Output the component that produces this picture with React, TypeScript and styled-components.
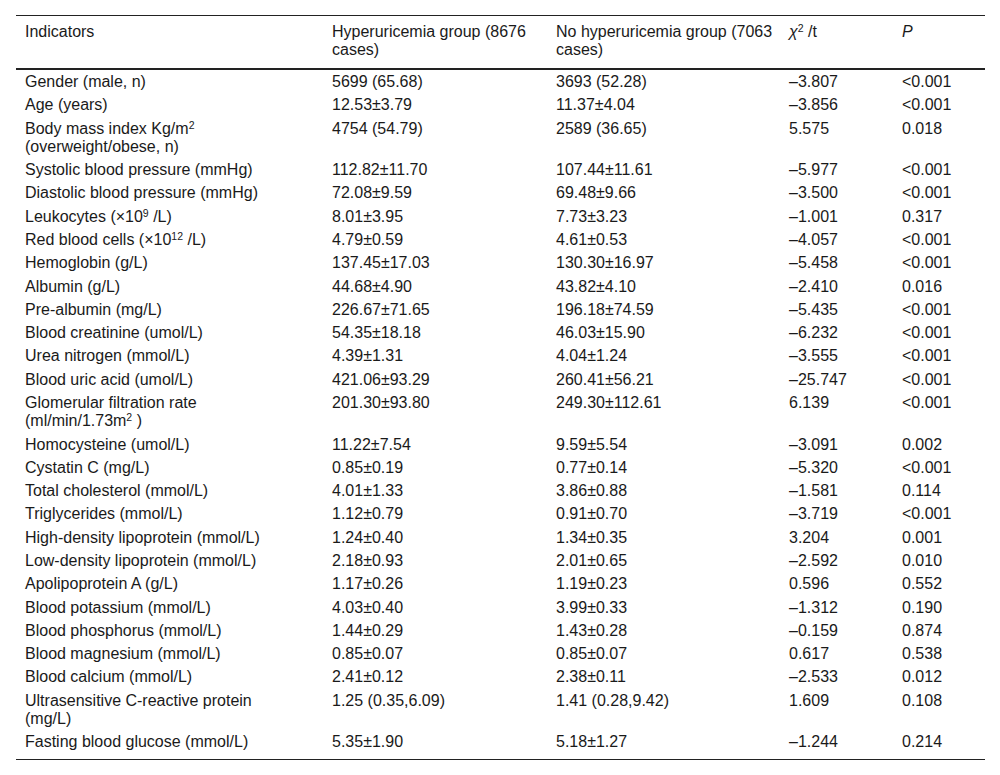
import React from 'react';
import styled, { createGlobalStyle } from 'styled-components';

const GlobalStyle = createGlobalStyle`
  body {
    margin: 0;
    background: #fff;
    font-family: "Liberation Sans", Arial, sans-serif;
    color: #1a1a1a;
  }
`;

const Page = styled.div`
  padding: 15px 15px 0 16px;
`;

const Table = styled.table`
  width: 969px;
  border-collapse: collapse;
  table-layout: fixed;
  font-size: 16px;
  line-height: 18.2px;
  border-top: 1px solid #222;
  border-bottom: 1px solid #222;

  sup {
    font-size: 10.5px;
    line-height: 0;
    vertical-align: 5.5px;
  }
`;

const HeadCell = styled.th`
  text-align: left;
  font-weight: normal;
  vertical-align: top;
  padding: 7px 4px 9px 9px;
  border-bottom: 2px solid #222;
`;

const Cell = styled.td<{ $last?: boolean }>`
  vertical-align: top;
  padding: 2.55px 4px ${(p) => (p.$last ? '8px' : '2.55px')} 9px;
  &:first-child {
    padding-right: 40px;
  }
`;

const Ital = styled.i`
  font-style: italic;
`;

type Row = [React.ReactNode, string, string, string, string];

const rows: Row[] = [
  ['Gender (male, n)', '5699 (65.68)', '3693 (52.28)', '–3.807', '<0.001'],
  ['Age (years)', '12.53±3.79', '11.37±4.04', '–3.856', '<0.001'],
  [<>Body mass index Kg/m<sup>2</sup> (overweight/obese, n)</>, '4754 (54.79)', '2589 (36.65)', '5.575', '0.018'],
  ['Systolic blood pressure (mmHg)', '112.82±11.70', '107.44±11.61', '–5.977', '<0.001'],
  ['Diastolic blood pressure (mmHg)', '72.08±9.59', '69.48±9.66', '–3.500', '<0.001'],
  [<>Leukocytes (×10<sup>9</sup> /L)</>, '8.01±3.95', '7.73±3.23', '–1.001', '0.317'],
  [<>Red blood cells (×10<sup>12</sup> /L)</>, '4.79±0.59', '4.61±0.53', '–4.057', '<0.001'],
  ['Hemoglobin (g/L)', '137.45±17.03', '130.30±16.97', '–5.458', '<0.001'],
  ['Albumin (g/L)', '44.68±4.90', '43.82±4.10', '–2.410', '0.016'],
  ['Pre-albumin (mg/L)', '226.67±71.65', '196.18±74.59', '–5.435', '<0.001'],
  ['Blood creatinine (umol/L)', '54.35±18.18', '46.03±15.90', '–6.232', '<0.001'],
  ['Urea nitrogen (mmol/L)', '4.39±1.31', '4.04±1.24', '–3.555', '<0.001'],
  ['Blood uric acid (umol/L)', '421.06±93.29', '260.41±56.21', '–25.747', '<0.001'],
  [<>Glomerular filtration rate (ml/min/1.73m<sup>2</sup> )</>, '201.30±93.80', '249.30±112.61', '6.139', '<0.001'],
  ['Homocysteine (umol/L)', '11.22±7.54', '9.59±5.54', '–3.091', '0.002'],
  ['Cystatin C (mg/L)', '0.85±0.19', '0.77±0.14', '–5.320', '<0.001'],
  ['Total cholesterol (mmol/L)', '4.01±1.33', '3.86±0.88', '–1.581', '0.114'],
  ['Triglycerides (mmol/L)', '1.12±0.79', '0.91±0.70', '–3.719', '<0.001'],
  ['High-density lipoprotein (mmol/L)', '1.24±0.40', '1.34±0.35', '3.204', '0.001'],
  ['Low-density lipoprotein (mmol/L)', '2.18±0.93', '2.01±0.65', '–2.592', '0.010'],
  ['Apolipoprotein A (g/L)', '1.17±0.26', '1.19±0.23', '0.596', '0.552'],
  ['Blood potassium (mmol/L)', '4.03±0.40', '3.99±0.33', '–1.312', '0.190'],
  ['Blood phosphorus (mmol/L)', '1.44±0.29', '1.43±0.28', '–0.159', '0.874'],
  ['Blood magnesium (mmol/L)', '0.85±0.07', '0.85±0.07', '0.617', '0.538'],
  ['Blood calcium (mmol/L)', '2.41±0.12', '2.38±0.11', '–2.533', '0.012'],
  ['Ultrasensitive C-reactive protein (mg/L)', '1.25 (0.35,6.09)', '1.41 (0.28,9.42)', '1.609', '0.108'],
  ['Fasting blood glucose (mmol/L)', '5.35±1.90', '5.18±1.27', '–1.244', '0.214'],
];

function App() {
  return (
    <Page>
      <GlobalStyle />
      <Table>
        <colgroup>
          <col style={{ width: 307 }} />
          <col style={{ width: 224 }} />
          <col style={{ width: 233 }} />
          <col style={{ width: 113 }} />
          <col />
        </colgroup>
        <thead>
          <tr>
            <HeadCell>Indicators</HeadCell>
            <HeadCell>Hyperuricemia group (8676 cases)</HeadCell>
            <HeadCell>No hyperuricemia group (7063 cases)</HeadCell>
            <HeadCell>
              <Ital>χ</Ital>
              <sup>2</sup> /t
            </HeadCell>
            <HeadCell>
              <Ital>P</Ital>
            </HeadCell>
          </tr>
        </thead>
        <tbody>
          {rows.map((r, i) => (
            <tr key={i}>
              {r.map((c, j) => (
                <Cell key={j} $last={i === rows.length - 1}>
                  {c}
                </Cell>
              ))}
            </tr>
          ))}
        </tbody>
      </Table>
    </Page>
  );
}

export default App;
